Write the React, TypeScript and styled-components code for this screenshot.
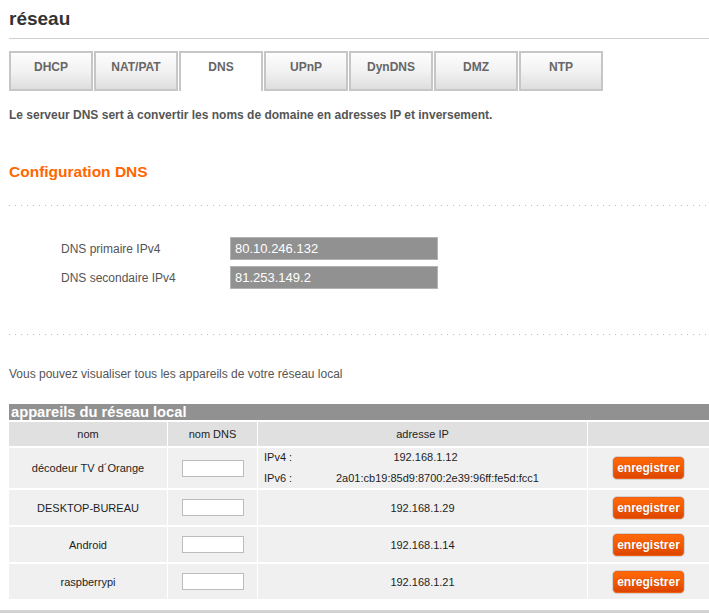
import React from "react";
import styled, { createGlobalStyle } from "styled-components";

const GlobalStyle = createGlobalStyle`
  html, body { margin: 0; padding: 0; background: #fff; }
  body { font-family: "Liberation Sans", Arial, sans-serif; color: #555; }
  * { box-sizing: border-box; }
`;

const Page = styled.div`
  width: 709px;
  display: flex;
  flex-direction: column;
`;

const Main = styled.div`
  padding-left: 9px;
  display: flex;
  flex-direction: column;
`;

const Title = styled.h1`
  margin: 0;
  padding: 8px 0 8px;
  font-size: 19px;
  line-height: 22px;
  font-weight: bold;
  color: #333;
  border-bottom: 1px solid #d0d0d0;
`;

const Tabs = styled.div`
  display: flex;
  gap: 1px;
  margin-top: 12px;
`;

const Tab = styled.div<{ $active?: boolean }>`
  width: 84px;
  height: 40px;
  padding-top: 7px;
  border: 2px solid #c6c6c6;
  border-bottom: ${(p) => (p.$active ? "none" : "2px solid #c6c6c6")};
  background: ${(p) =>
    p.$active ? "#fff" : "linear-gradient(to bottom, #fdfdfd 0%, #f2f2f2 50%, #dedede 100%)"};
  font-size: 12px;
  line-height: 14px;
  font-weight: bold;
  color: #666;
  text-align: center;
`;

const Intro = styled.p`
  margin: 17px 0 0;
  font-size: 12px;
  line-height: 14px;
  font-weight: bold;
  color: #555;
`;

const SectionTitle = styled.h2`
  margin: 40px 0 0;
  font-size: 15.5px;
  line-height: 20px;
  font-weight: bold;
  color: #ff6600;
`;

const Dots = styled.div<{ $top: number }>`
  margin-top: ${(p) => p.$top}px;
  height: 1px;
  background: repeating-linear-gradient(to right, #f7ab7c 0 1px, transparent 1px 6px);
`;

const Form = styled.div`
  margin-top: 31px;
  padding-left: 52px;
  display: grid;
  grid-template-columns: 169px 208px;
  row-gap: 6px;
  align-items: center;
`;

const FieldLabel = styled.label`
  font-size: 12px;
  color: #555;
`;

const GreyField = styled.div`
  height: 23px;
  padding: 0 4px;
  background: #919191;
  border: 1px solid #b3b3b3;
  color: #fff;
  font-size: 13px;
  line-height: 21px;
`;

const Note = styled.p`
  margin: 32px 0 0;
  font-size: 12px;
  line-height: 14px;
  color: #555;
`;

const TableBar = styled.div`
  margin-top: 23px;
  height: 16px;
  padding-left: 2px;
  background: #919191;
  color: #fff;
  font-size: 14.7px;
  line-height: 17px;
  font-weight: bold;
`;

const Grid = styled.div`
  margin-top: 2px;
  display: grid;
  grid-template-columns: 158px 89px 329px 1fr;
  column-gap: 1px;
  row-gap: 2px;
  font-size: 11px;
  color: #1e1e1e;
`;

const HeadCell = styled.div`
  height: 24px;
  background: #e0e0e0;
  display: flex;
  align-items: center;
  justify-content: center;
`;

const Cell = styled.div<{ $h: number }>`
  height: ${(p) => p.$h}px;
  background: #f0f0f0;
  display: flex;
  align-items: center;
  justify-content: center;
`;

const IpCell = styled.div<{ $h: number }>`
  height: ${(p) => p.$h}px;
  background: #f0f0f0;
  padding-left: 6px;
  display: flex;
  flex-direction: column;
  justify-content: center;
`;

const IpLine = styled.div`
  display: grid;
  grid-template-columns: 72px 1fr;
  line-height: 21px;
`;

const IpValue = styled.span<{ $center?: boolean }>`
  text-align: ${(p) => (p.$center ? "center" : "left")};
  padding-right: ${(p) => (p.$center ? "72px" : "0")};
  white-space: nowrap;
`;

const DnsInput = styled.input`
  width: 62px;
  height: 17px;
  border: 1px solid #bcbcbc;
  background: #fff;
  padding: 0 2px;
  font-size: 11px;
  outline: none;
`;

const SaveButton = styled.button`
  width: 73px;
  height: 24px;
  padding: 0;
  border: 1px solid #d2d2d2;
  border-radius: 5px;
  background: linear-gradient(to bottom, #ff6a0a 0%, #f55a00 50%, #d94200 100%);
  box-shadow: inset 0 0 0 1px #f06010;
  color: #fff;
  font-family: "Liberation Sans", Arial, sans-serif;
  font-size: 12px;
  font-weight: bold;
  text-shadow: 0 0 1px rgba(120, 30, 0, 0.5);
  cursor: pointer;
`;

const Footer = styled.div`
  margin-top: 11px;
  height: 4px;
  border-top: 3px solid #d3d3d3;
`;

type Device = { name: string; ip?: string; ipv4?: string; ipv6?: string };

const devices: Device[] = [
  { name: "décodeur TV d´Orange", ipv4: "192.168.1.12", ipv6: "2a01:cb19:85d9:8700:2e39:96ff:fe5d:fcc1" },
  { name: "DESKTOP-BUREAU", ip: "192.168.1.29" },
  { name: "Android", ip: "192.168.1.14" },
  { name: "raspberrypi", ip: "192.168.1.21" },
];

const tabs = ["DHCP", "NAT/PAT", "DNS", "UPnP", "DynDNS", "DMZ", "NTP"];

export default function App() {
  return (
    <Page>
      <GlobalStyle />
      <Main>
        <Title>réseau</Title>
        <Tabs>
          {tabs.map((t) => (
            <Tab key={t} $active={t === "DNS"}>
              {t}
            </Tab>
          ))}
        </Tabs>
        <Intro>Le serveur DNS sert à convertir les noms de domaine en adresses IP et inversement.</Intro>
        <SectionTitle>Configuration DNS</SectionTitle>
        <Dots $top={23} />
        <Form>
          <FieldLabel>DNS primaire IPv4</FieldLabel>
          <GreyField>80.10.246.132</GreyField>
          <FieldLabel>DNS secondaire IPv4</FieldLabel>
          <GreyField>81.253.149.2</GreyField>
        </Form>
        <Dots $top={45} />
        <Note>Vous pouvez visualiser tous les appareils de votre réseau local</Note>
        <TableBar>appareils du réseau local</TableBar>
        <Grid>
          <HeadCell>nom</HeadCell>
          <HeadCell>nom DNS</HeadCell>
          <HeadCell>adresse IP</HeadCell>
          <HeadCell />
          {devices.map((d, i) => {
            const h = i === 0 ? 40 : 35;
            return (
              <React.Fragment key={d.name}>
                <Cell $h={h}>{d.name}</Cell>
                <Cell $h={h}>
                  <DnsInput type="text" />
                </Cell>
                {d.ip ? (
                  <Cell $h={h}>{d.ip}</Cell>
                ) : (
                  <IpCell $h={h}>
                    <IpLine>
                      <span>IPv4 :</span>
                      <IpValue $center>{d.ipv4}</IpValue>
                    </IpLine>
                    <IpLine>
                      <span>IPv6 :</span>
                      <IpValue>{d.ipv6}</IpValue>
                    </IpLine>
                  </IpCell>
                )}
                <Cell $h={h}>
                  <SaveButton>enregistrer</SaveButton>
                </Cell>
              </React.Fragment>
            );
          })}
        </Grid>
      </Main>
      <Footer />
    </Page>
  );
}
